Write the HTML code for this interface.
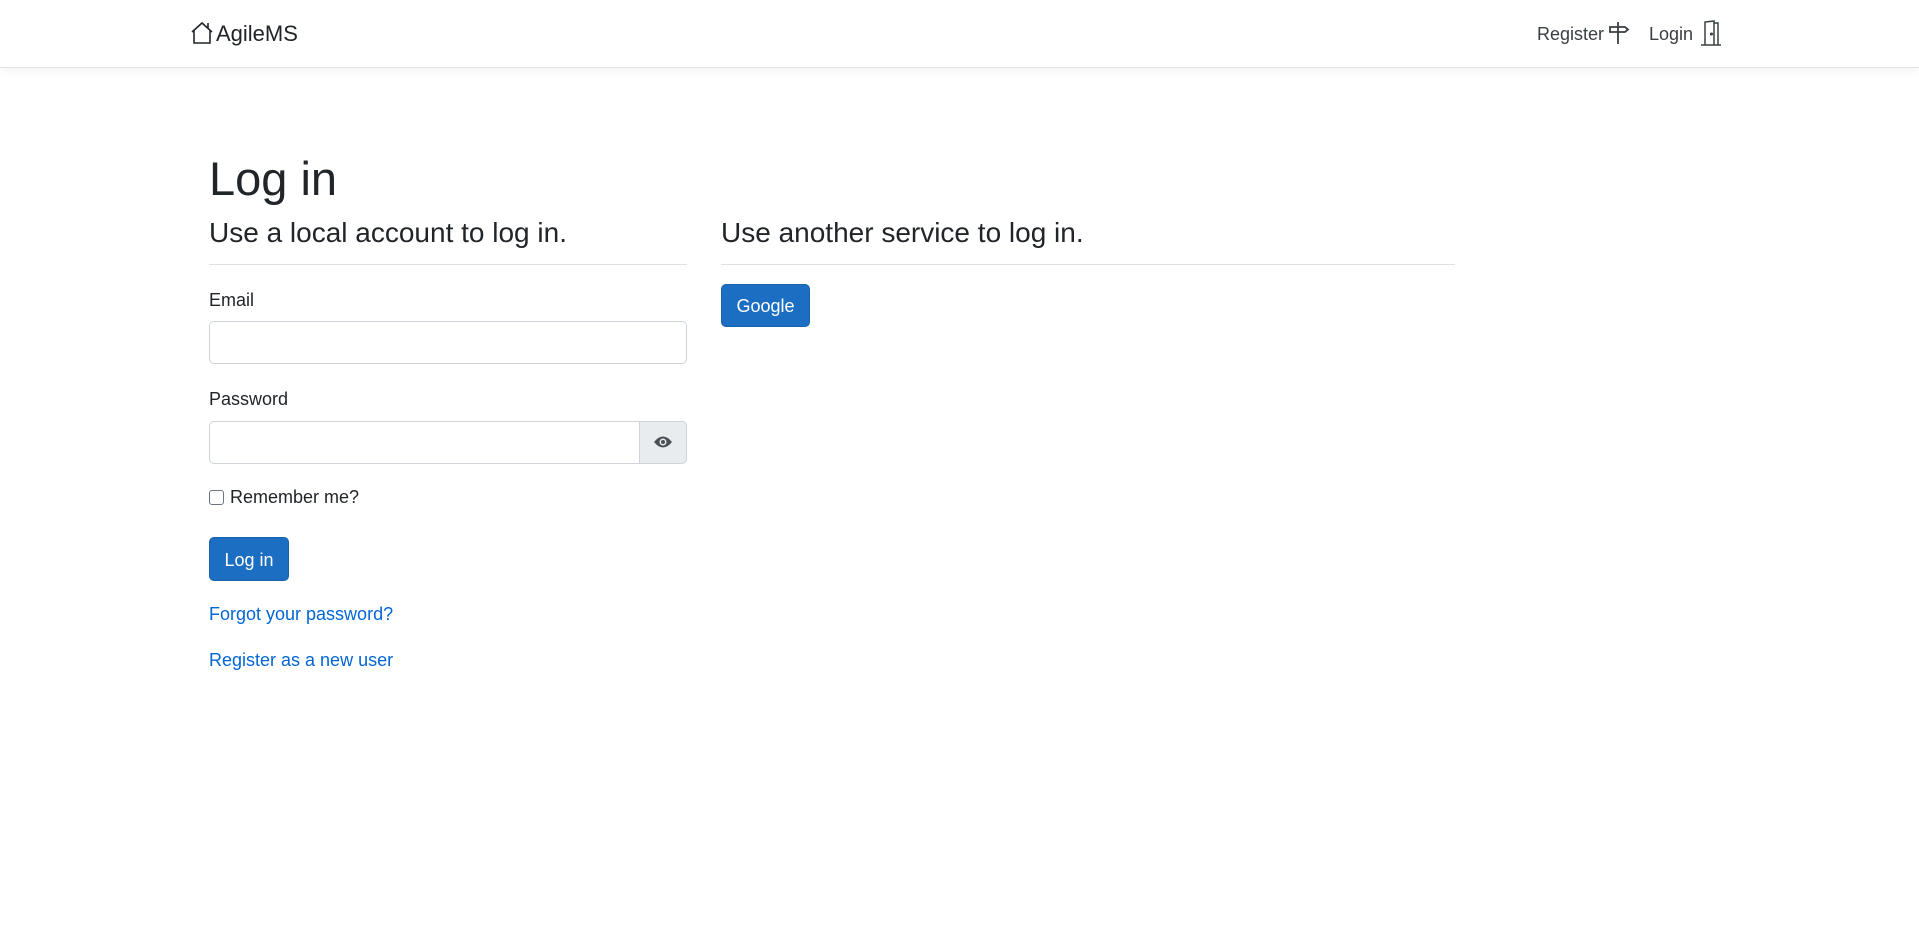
<!DOCTYPE html>
<html><head><style>
body{margin:0;width:1919px;height:948px;background:#fff;font-family:"Liberation Sans",sans-serif;color:#212529;position:relative;overflow:hidden}
.a{position:absolute;white-space:nowrap}
nav{position:absolute;left:0;top:0;width:1919px;height:67px;border-bottom:1px solid #dee2e6;box-shadow:0 4px 8px rgba(0,0,0,.04)}
.inp{position:absolute;border:1px solid #ced4da;border-radius:5px;background:#fff;box-sizing:border-box}
.btn{position:absolute;background:#1b6ec2;border:1px solid #1861ac;border-radius:5px;color:#fff;font-size:18px;display:flex;align-items:center;justify-content:center;box-sizing:border-box}
.lnk{color:#0366d6}
</style></head><body>
<nav>
<svg class="a" style="left:190px;top:21px" width="24" height="24" viewBox="0 0 24 24" fill="none" stroke="#212529" stroke-width="1.6"><path d="M2 11 L12 2 L22 11 M4 9.5 V22 H20 V9.5 M18 7 V2"/></svg>
<div class="a" style="left:216px;top:21px;font-size:22px">AgileMS</div>
<div class="a" style="left:1537px;top:24px;font-size:18px;color:#3a3f44">Register</div>
<svg class="a" style="left:1608px;top:21px" width="22" height="24" viewBox="0 0 22 24" fill="none" stroke="#3a3f44" stroke-width="1.8"><path d="M10 1 V23 M2 6 H17 L20 8.5 L17 11 H2 Z"/></svg>
<div class="a" style="left:1649px;top:24px;font-size:18px;color:#3a3f44">Login</div>
<svg class="a" style="left:1700px;top:20px" width="22" height="26" viewBox="0 0 22 26" fill="none" stroke="#3a3f44" stroke-width="1.5"><path d="M1 25 H21 M5 25 V2 L14 1 V25 M14 3 H18 V25"/><circle cx="11.5" cy="14" r="0.8" fill="#3a3f44"/></svg>
</nav>
<div class="a" style="left:209px;top:151px;font-size:47px">Log in</div>
<div class="a" style="left:209px;top:217px;font-size:28px">Use a local account to log in.</div>
<div class="a" style="left:209px;top:264px;width:478px;height:1px;background:#dee2e6"></div>
<div class="a" style="left:721px;top:217px;font-size:28px">Use another service to log in.</div>
<div class="a" style="left:721px;top:264px;width:734px;height:1px;background:#dee2e6"></div>
<div class="btn" style="left:721px;top:284px;width:89px;height:43px;padding-top:2px">Google</div>
<div class="a" style="left:209px;top:290px;font-size:18px">Email</div>
<div class="inp" style="left:209px;top:321px;width:478px;height:43px"></div>
<div class="a" style="left:209px;top:389px;font-size:18px">Password</div>
<div class="inp" style="left:209px;top:421px;width:478px;height:43px"></div>
<div class="a" style="left:639px;top:421px;width:48px;height:43px;background:#e9ecef;border:1px solid #ced4da;border-radius:0 5px 5px 0;box-sizing:border-box"></div>
<svg class="a" style="left:653px;top:434px" width="20" height="16" viewBox="0 0 20 16"><path d="M1 8 Q10 -3 19 8 Q10 19 1 8Z" fill="#495057"/><circle cx="10" cy="8" r="3.5" fill="#e9ecef"/><circle cx="10" cy="8" r="2" fill="#495057"/></svg>
<div class="a" style="left:209px;top:490px;width:15px;height:15px;border:1.5px solid #6c757d;border-radius:3px;box-sizing:border-box"></div>
<div class="a" style="left:230px;top:487px;font-size:18px">Remember me?</div>
<div class="btn" style="left:209px;top:537px;width:80px;height:44px;padding-top:2px">Log in</div>
<div class="a lnk" style="left:209px;top:604px;font-size:18px">Forgot your password?</div>
<div class="a lnk" style="left:209px;top:650px;font-size:18px">Register as a new user</div>
</body></html>
